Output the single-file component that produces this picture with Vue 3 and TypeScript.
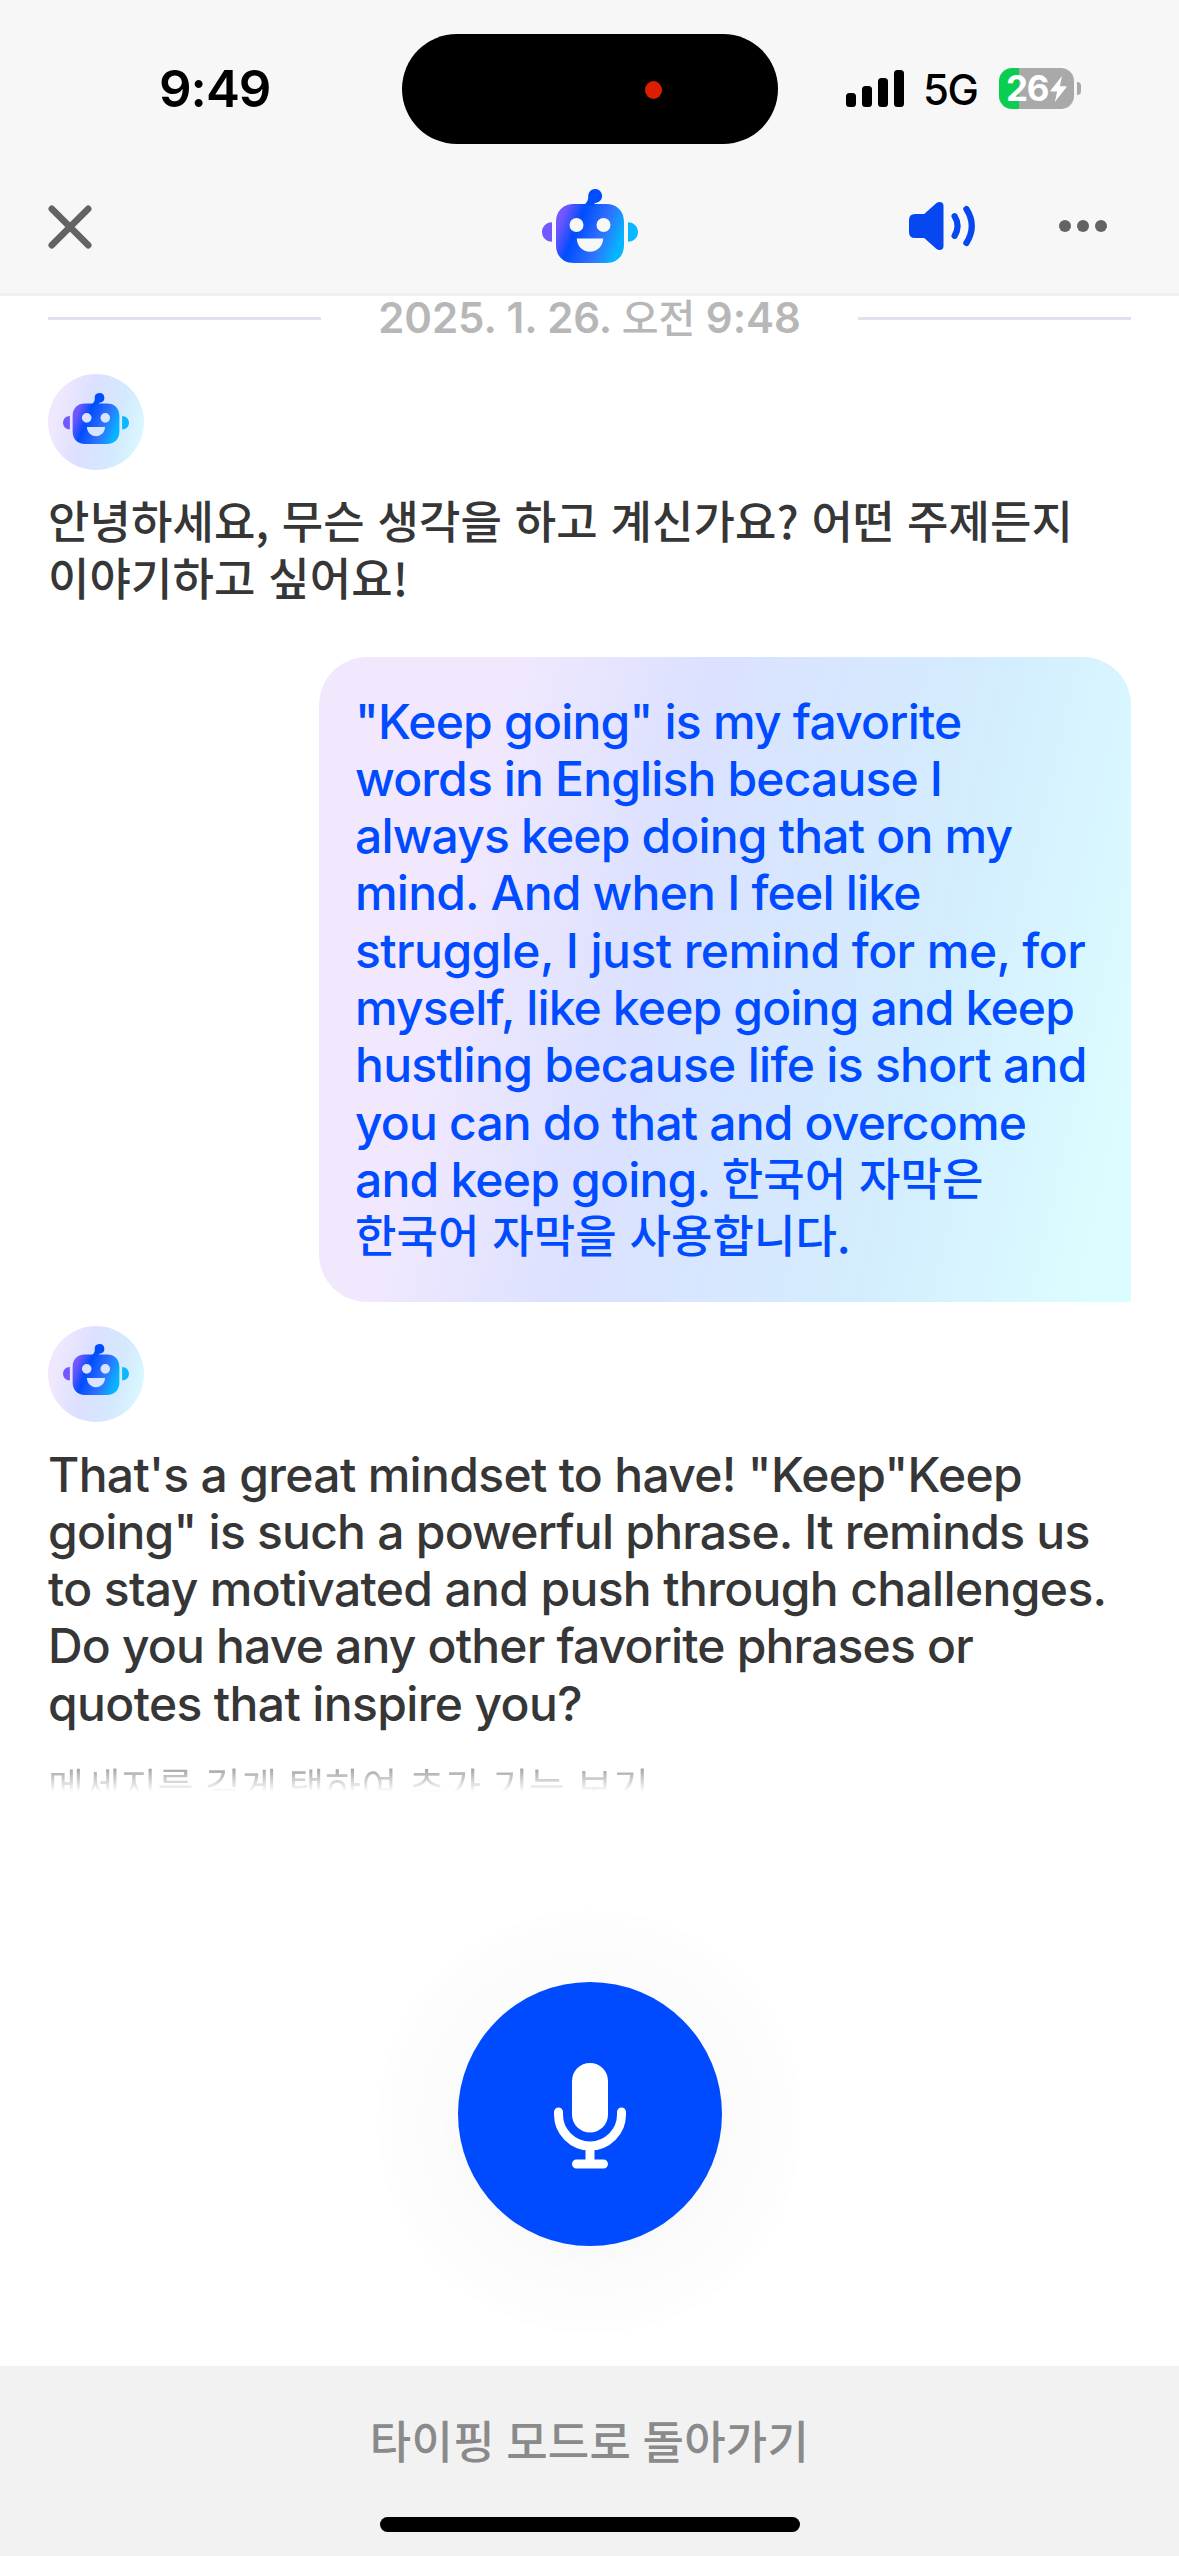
<script setup lang="ts">
interface Line {
  text?: string
  /** Korean run, placed after any Latin text on the same line */
  ko?: string
  tracking?: number
}

interface Message {
  from: 'bot' | 'user'
  lines: Line[]
}

const messages: Message[] = [
  {
    from: 'bot',
    lines: [
      { ko: '안녕하세요, 무슨 생각을 하고 계신가요? 어떤 주제든지' },
      { ko: '이야기하고 싶어요!' },
    ],
  },
  {
    from: 'user',
    lines: [
      { text: '"Keep going" is my favorite', tracking: -0.78 },
      { text: 'words in English because I', tracking: -0.85 },
      { text: 'always keep doing that on my', tracking: -0.83 },
      { text: 'mind. And when I feel like', tracking: -0.79 },
      { text: 'struggle, I just remind for me, for', tracking: -0.55 },
      { text: 'myself, like keep going and keep', tracking: -0.85 },
      { text: 'hustling because life is short and', tracking: -0.7 },
      { text: 'you can do that and overcome', tracking: -0.83 },
      { text: 'and keep going. ', ko: '한국어 자막은', tracking: -0.8 },
      { ko: '한국어 자막을 사용합니다.' },
    ],
  },
  {
    from: 'bot',
    lines: [
      { text: 'That\'s a great mindset to have! "Keep"Keep', tracking: -0.68 },
      { text: 'going" is such a powerful phrase. It reminds us', tracking: -0.77 },
      { text: 'to stay motivated and push through challenges.', tracking: -0.65 },
      { text: 'Do you have any other favorite phrases or', tracking: -0.82 },
      { text: 'quotes that inspire you?', tracking: -0.63 },
    ],
  },
]

const signalBars: number[] = [14, 21, 29, 37]
</script>

<template>
  <div class="screen">
    <svg class="defs" width="0" height="0" aria-hidden="true">
      <defs>
        <linearGradient id="bot-fill" gradientUnits="userSpaceOnUse" x1="12" y1="28" x2="82" y2="56">
          <stop offset="0" stop-color="#7a5cff" />
          <stop offset="0.12" stop-color="#6a55ff" />
          <stop offset="0.33" stop-color="#004dff" />
          <stop offset="0.66" stop-color="#2f70ff" />
          <stop offset="0.95" stop-color="#05b6ff" />
        </linearGradient>
        <symbol id="bot" viewBox="0 0 96 74">
          <path d="M10 33.200v19.600C4 52.600 0 48.400 0 43s4-9.600 10-9.800z" fill="#7358ff" />
          <path d="M86 33.200v19.600c6-.2 10-4.400 10-9.800s-4-9.600-10-9.800z" fill="#0ab8ff" />
          <path
            fill="url(#bot-fill)"
            fill-rule="evenodd"
            d="M32 15h32c11 0 18 7 18 18v23c0 11-7 18-18 18H32c-11 0-18-7-18-18V33c0-11 7-18 18-18zM34.500 29a7 7 0 1 0 0 14 7 7 0 0 0 0-14zM61.500 29a7 7 0 1 0 0 14 7 7 0 0 0 0-14zM34.800 49.500c.2 7.500 5.800 13.200 13.200 13.200s13-5.700 13.200-13.200z"
          />
          <path d="M42.500 16c3-3.600 4.200-5.600 3.600-9A7 7 0 1 1 54.500 13.800c-1.500.2-2.200.8-3 2.200z" fill="#004dff" />
        </symbol>
      </defs>
    </svg>

    <header class="top">
      <div class="status">
        <div class="status-left">9:49</div>
        <div class="island"><i class="rec"></i></div>
        <div class="status-right">
          <div class="signal">
            <i v-for="h in signalBars" :key="h" :style="{ height: h + 'px' }"></i>
          </div>
          <span class="net">5G</span>
          <div class="battery">
            <span>26</span>
            <svg width="17" height="26" viewBox="0 0 17 26"><path d="M12 0L.6 14.400q-.6 1 .6 1h6L4.800 26 16.400 11.300q.6-1-.6-1H9.800z" fill="#fff" /></svg>
          </div>
          <i class="battery-tip"></i>
        </div>
      </div>
      <nav class="nav">
        <svg class="close" width="44" height="44" viewBox="0 0 44 44">
          <path d="M3.800 3.800l36.400 36.400M40.200 3.800L3.800 40.200" stroke="#636366" stroke-width="6.600" stroke-linecap="round" />
        </svg>
        <svg class="nav-bot" width="96" height="74"><use href="#bot" /></svg>
        <div class="nav-actions">
          <svg width="67" height="48" viewBox="0 0 67 48">
            <path d="M6 12h9.200L27.200 1.200Q29 0 30.500 0 34.500.2 34.500 4v40q0 3.800-4 4-1.500 0-3.300-1.200L15.200 36H6q-6 0-6-6V18q0-6 6-6z" fill="#0747f0" />
            <path d="M45.600 14.200q6 9.800 0 19.600M57.400 7q10.800 17 0 34" fill="none" stroke="#0747f0" stroke-width="6.200" stroke-linecap="round" />
          </svg>
          <svg width="48" height="12" viewBox="0 0 48 12" fill="#636366">
            <circle cx="6" cy="6" r="6" /><circle cx="24" cy="6" r="6" /><circle cx="42" cy="6" r="6" />
          </svg>
        </div>
      </nav>
    </header>

    <main class="chat">
      <div class="date"><i></i><span>2025. 1. 26. <b>오전</b> 9:48</span><i></i></div>
      <section v-for="(m, i) in messages" :key="i" class="msg" :class="m.from">
        <div v-if="m.from === 'bot'" class="avatar">
          <svg width="66" height="51"><use href="#bot" /></svg>
        </div>
        <div class="body">
          <div
            v-for="(l, j) in m.lines"
            :key="j"
            class="line"
            :style="l.tracking !== undefined ? { letterSpacing: l.tracking + 'px' } : undefined"
          >{{ l.text }}<span v-if="l.ko" class="ko">{{ l.ko }}</span></div>
        </div>
      </section>
      <p class="hint">메세지를 길게 택하여 추가 기능 보기</p>
    </main>

    <div class="voice">
      <div class="halo">
        <button class="mic" type="button">
          <svg width="72" height="106" viewBox="0 0 72 106">
            <rect x="18" y="0" width="36" height="69.500" rx="18" fill="#fff" />
            <path d="M4.500 49v2.500a31.500 31.500 0 0 0 63 0V49M36 84v16M22.500 101h27" fill="none" stroke="#fff" stroke-width="9" stroke-linecap="round" />
          </svg>
        </button>
      </div>
    </div>

    <footer class="bottom">
      <span class="typing">타이핑 모드로 돌아가기</span>
      <i class="home"></i>
    </footer>
  </div>
</template>

<style>
body {
  background: #fff;
}
</style>

<style scoped>
.screen {
  width: 1179px;
  height: 2556px;
  display: flex;
  flex-direction: column;
  overflow: hidden;
  background: #fff;
  font-family: Inter, "Noto Sans CJK KR", sans-serif;
  -webkit-font-smoothing: antialiased;
}
.defs {
  position: absolute;
}
.top {
  box-sizing: border-box;
  height: 296px;
  flex: none;
  background: #f7f7f7;
  border-bottom: 3px solid #f1f1f1;
}
.status {
  height: 177px;
  display: flex;
  padding-top: 34px;
  box-sizing: border-box;
}
.status-left {
  width: 402px;
  padding-left: 159px;
  box-sizing: border-box;
  font-size: 51px;
  font-weight: 600;
  line-height: 109px;
  letter-spacing: -1px;
}
.island {
  width: 376px;
  height: 110px;
  border-radius: 55px;
  background: #000;
  display: flex;
  align-items: center;
}
.rec {
  width: 17px;
  height: 18px;
  border-radius: 50%;
  background: #dc1d00;
  margin: 1px 0 0 243px;
}
.status-right {
  display: flex;
  align-items: center;
  height: 109px;
  padding-left: 68px;
}
.signal {
  display: flex;
  align-items: flex-end;
  gap: 6px;
  height: 37px;
}
.signal i {
  width: 10px;
  border-radius: 3.500px;
  background: #000;
}
.net {
  width: 75px;
  padding-left: 17px;
  box-sizing: border-box;
  font-size: 42px;
  font-weight: 500;
  line-height: 50px;
  letter-spacing: -1.500px;
  padding-top: 2px;
  margin-left: 2px;
}
.battery {
  width: 75px;
  height: 41px;
  border-radius: 13px;
  background: linear-gradient(90deg, #0bce50 20px, #a9a9a9 20px);
  display: flex;
  align-items: center;
  justify-content: center;
  gap: 2px;
  color: #fff;
  font-size: 35px;
  font-weight: 700;
  line-height: 41px;
  letter-spacing: -1.500px;
  margin-left: 18px;
}
.battery-tip {
  width: 4px;
  height: 13px;
  margin-left: 3px;
  border-radius: 0 4px 4px 0;
  background: #a9a9a9;
}
.nav {
  display: flex;
  align-items: flex-start;
  padding-left: 48px;
}
.close {
  margin-top: 28px;
}
.nav-bot {
  margin: 12px 0 0 450px;
}
.nav-actions {
  display: flex;
  align-items: center;
  gap: 83px;
  margin: 25px 0 0 271px;
}
.chat {
  box-sizing: border-box;
  height: 1496px;
  flex: none;
  padding: 0 48px;
  overflow: hidden;
}
.date {
  display: flex;
  align-items: center;
  justify-content: space-between;
  height: 45px;
  margin-bottom: 33px;
}
.date i {
  width: 273px;
  height: 3px;
  background: #e0e0ef;
}
.date span {
  margin-top: -6px;
  font-size: 42px;
  font-weight: 600;
  color: #b7b7b7;
  letter-spacing: -0.050px;
  white-space: nowrap;
}
.date b {
  font-weight: 500;
  font-size: 40px;
}
.body {
  color: #363636;
  font-size: 48px;
  font-weight: 500;
}
.line {
  height: 57.300px;
  line-height: 57.300px;
  white-space: pre;
}
.ko {
  font-family: "Noto Sans CJK KR", sans-serif;
  font-size: 45px;
  line-height: 0;
  vertical-align: 1px;
  letter-spacing: 0.100px;
  word-spacing: 2.500px;
}
.avatar {
  width: 96px;
  height: 96px;
  border-radius: 50%;
  display: flex;
  justify-content: center;
  padding-top: 18.500px;
  box-sizing: border-box;
  margin-bottom: 24px;
  background: linear-gradient(103deg, #f1e8fe 12%, #dbe0ff 42%, #d4eafe 72%, #dcfdff 98%);
}
.user {
  display: flex;
  justify-content: flex-end;
  margin: 48px 0 24px;
}
.user .body {
  box-sizing: border-box;
  width: 812px;
  height: 645px;
  padding: 36px;
  border-radius: 48px 48px 0 48px;
  color: #004bff;
  background: linear-gradient(103deg, #f1e8fe 20%, #dbe1ff 41%, #d3edfe 72%, #dcfdff 96%);
}
.hint {
  margin: 27px 0 0;
  font-family: "Noto Sans CJK KR", sans-serif;
  font-size: 39px;
  line-height: 50px;
  letter-spacing: 0.600px;
  word-spacing: 1.500px;
  white-space: nowrap;
  color: transparent;
  background: linear-gradient(#a6a6a6 10px, #fff 33px);
  background-clip: text;
  -webkit-background-clip: text;
}
.voice {
  flex: 1;
  display: flex;
  justify-content: center;
  padding-top: 118px;
}
.halo {
  width: 424px;
  height: 424px;
  border-radius: 50%;
  background: radial-gradient(closest-side, #fcfcfc 78%, #fefefe);
  display: flex;
  justify-content: center;
}
.mic {
  width: 264px;
  height: 264px;
  margin-top: 72px;
  padding: 3px 0 0;
  border: 0;
  border-radius: 50%;
  background: #004bff;
  box-shadow: 0 12px 36px rgba(0, 0, 0, 0.02);
  display: flex;
  align-items: center;
  justify-content: center;
}
.bottom {
  height: 190px;
  flex: none;
  background: #f2f2f2;
  display: flex;
  flex-direction: column;
  align-items: center;
}
.typing {
  margin-top: 41px;
  height: 68px;
  line-height: 66px;
  font-family: "Noto Sans CJK KR", sans-serif;
  font-size: 45px;
  font-weight: 500;
  letter-spacing: 0.250px;
  word-spacing: 1px;
  color: #8a8a8a;
}
.home {
  width: 420px;
  height: 15px;
  border-radius: 8px;
  background: #000;
  margin-top: 42px;
}
</style>
